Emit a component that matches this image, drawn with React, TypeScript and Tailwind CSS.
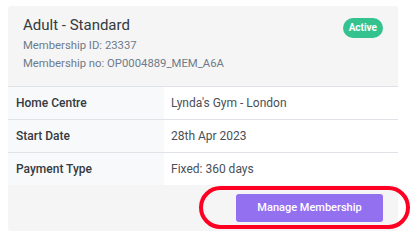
import React from "react";

export default function App() {
  const rows = [
    ["Home Centre", "Lynda's Gym - London"],
    ["Start Date", "28th Apr 2023"],
    ["Payment Type", "Fixed: 360 days"],
  ];
  return (
    <div className="relative w-[417px] h-[247px] bg-white" style={{ fontFamily: "Roboto, 'Liberation Sans', sans-serif" }}>
      <div className="absolute left-[8px] top-[6px] w-[390px] h-[225px] bg-[#f5f5f5] rounded-[3px] flex flex-col">
        <div className="flex justify-between pl-[15px] pr-[15px] h-[80px]">
          <div className="pt-[9px]">
            <div className="text-[15px] leading-[20px] text-[#343a40]">Adult - Standard</div>
            <div className="mt-[2px] text-[11.3px] leading-[18px] text-[#6f7a8a]">Membership ID: 23337</div>
            <div className="text-[11.3px] leading-[18px] text-[#6f7a8a]">Membership no: OP0004889_MEM_A6A</div>
          </div>
          <div className="pt-[8px]">
            <span className="inline-flex items-center justify-center h-[20px] px-[6px] rounded-full bg-[#34c38f] text-white text-[10px] font-bold">Active</span>
          </div>
        </div>
        <div className="border-t border-[#dfe3e8]">
          {rows.map(([k, v], i) => (
            <div key={k} className={"flex text-[12px] " + (i > 0 ? "border-t border-[#dfe3e8]" : "")}>
              <div className="w-[156px] h-[32px] flex items-center px-[8px] bg-[#f8f9fa] font-medium text-[#343a40]">{k}</div>
              <div className="flex-1 h-[32px] flex items-center px-[7px] bg-white text-[#495057]">{v}</div>
            </div>
          ))}
        </div>
        <div className="flex justify-end pr-[15px] pt-[9px]">
          <button className="w-[147px] h-[28px] rounded-[3px] bg-[#9370f0] text-white text-[11px] font-medium">Manage Membership</button>
        </div>
      </div>
      <div className="absolute left-[199px] top-[186px] w-[211px] h-[43px] rounded-full border-[4px] border-[#ff0022]" />
    </div>
  );
}
